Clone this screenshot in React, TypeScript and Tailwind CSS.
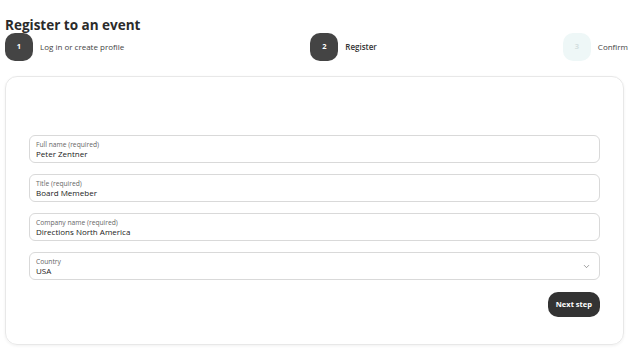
import React from "react";
import { ChevronDown } from "lucide-react";

interface Step {
    n: number;
    label: string;
    state: "done" | "active" | "todo";
}

const steps: Step[] = [
    { n: 1, label: "Log in or create profile", state: "done" },
    { n: 2, label: "Register", state: "active" },
    { n: 3, label: "Confirm", state: "todo" },
];

const fields = [
    { label: "Full name (required)", value: "Peter Zentner" },
    { label: "Title (required)", value: "Board Memeber" },
    { label: "Company name (required)", value: "Directions North America" },
];

const App: React.FC = () => {
    return (
        <div className="w-[640px] h-[351px] bg-white text-[#333] font-['Open_Sans',sans-serif] overflow-hidden">
            <div className="pl-[5px] pr-[12px] pt-[16px]">
                <h1 className="text-[13.5px] font-bold leading-[18px] text-[#2b2b2b]">Register to an event</h1>
                <div className="flex justify-between items-center -mt-[1px]">
                    {steps.map((s) => (
                        <div key={s.n} className="flex items-center gap-[7px]">
                            <div
                                className={
                                    s.state === "todo"
                                        ? "w-[28px] h-[28px] rounded-[10px] bg-[#eef7f7] text-[#d4e0e0] flex items-center justify-center text-[7.5px] font-bold"
                                        : "w-[28px] h-[28px] rounded-[10px] bg-[#444] text-white flex items-center justify-center text-[7.5px] font-bold"
                                }
                            >
                                {s.n}
                            </div>
                            <span
                                className={
                                    s.state === "active"
                                        ? "text-[8px] font-semibold text-[#333]"
                                        : "text-[8px] text-[#444]"
                                }
                            >
                                {s.label}
                            </span>
                        </div>
                    ))}
                </div>
            </div>

            <div className="ml-[5px] mr-[16px] mt-[15px] h-[269px] rounded-[12px] border border-[#e8e8e8] shadow-[0_1px_3px_rgba(0,0,0,0.06)] px-[23px] pt-[58px]">
                <div className="flex flex-col gap-[11px]">
                    {fields.map((f) => (
                        <div key={f.label} className="h-[28px] rounded-[6px] border border-[#d9d9d9] px-[6px] pt-[4px]">
                            <div className="text-[6.7px] leading-[9px] text-[#666]">{f.label}</div>
                            <div className="text-[8px] leading-[10px] text-[#222]">{f.value}</div>
                        </div>
                    ))}
                    <div className="h-[28px] rounded-[6px] border border-[#d9d9d9] pl-[6px] pr-[8px] pt-[4px] flex items-start justify-between">
                        <div>
                            <div className="text-[6.7px] leading-[9px] text-[#666]">Country</div>
                            <div className="text-[8px] leading-[10px] text-[#222]">USA</div>
                        </div>
                        <ChevronDown size={9} strokeWidth={1.5} className="text-[#555] mt-[5px]" />
                    </div>
                </div>
                <div className="flex justify-end mt-[12px]">
                    <button className="h-[25px] px-[8px] rounded-[10px] bg-[#333] text-white text-[7.5px] font-bold">
                        Next step
                    </button>
                </div>
            </div>
        </div>
    );
};

export default App;
